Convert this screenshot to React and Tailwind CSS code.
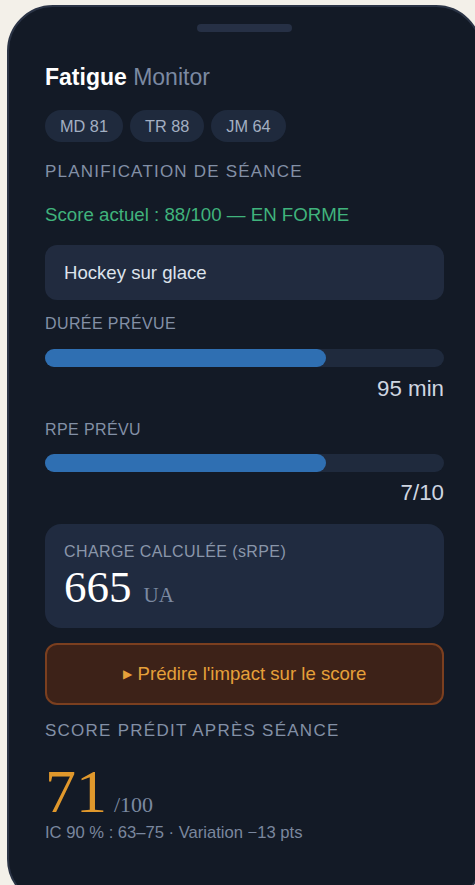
const chips = ['MD 81', 'TR 88', 'JM 64']

function Bar({ pct }) {
  return (
    <div className="h-[18px] w-full rounded-full bg-[#1f2a3d]">
      <div className="h-full rounded-full bg-[#2f6fb2]" style={{ width: `${pct}%` }} />
    </div>
  )
}

export default function App() {
  return (
    <div className="w-[475px] h-[885px] overflow-hidden bg-[#f3f0e9] font-['Liberation_Sans',Arial,sans-serif]">
      <div className="ml-[7px] mt-[5px] w-[475px] h-[900px] rounded-[46px] border-2 border-[#2b3446] bg-[#131a26] px-[36px] pt-[17px]">
        {/* notch */}
        <div className="mx-auto h-2 w-[95px] rounded-full bg-[#263045]" />

        <h1 className="mt-[31px] text-[23px] leading-[28px]">
          <span className="font-bold text-white">Fatigue</span>{' '}
          <span className="text-[#7b89a1]">Monitor</span>
        </h1>

        <div className="mt-[19px] flex gap-[7px]">
          {chips.map((c) => (
            <span key={c} className="flex h-8 items-center rounded-full bg-[#1f2a3d] px-[15px] text-[16.3px] text-[#a3afc2]">
              {c}
            </span>
          ))}
        </div>

        <p className="mt-[19px] text-[17px] leading-[22px] tracking-[1.2px] text-[#8390a6]">PLANIFICATION DE SÉANCE</p>

        <p className="mt-[20px] text-[18.7px] leading-[24px] text-[#40b37c]">Score actuel : 88/100 — EN FORME</p>

        <div className="mt-[18px] flex h-[55px] items-center rounded-xl bg-[#212b3f] px-[19px] text-[18.6px] text-[#dde3ec]">
          Hockey sur glace
        </div>

        <p className="mt-[14px] text-[16px] leading-[20px] tracking-[0.4px] text-[#8390a6]">DURÉE PRÉVUE</p>
        <div className="mt-[15px]">
          <Bar pct={70.5} />
        </div>
        <p className="mt-[8px] text-right text-[22.3px] leading-[28px] text-[#cfd6e1]">95 min</p>

        <p className="mt-[17px] text-[16px] leading-[20px] tracking-[0.4px] text-[#8390a6]">RPE PRÉVU</p>
        <div className="mt-[14px]">
          <Bar pct={70.5} />
        </div>
        <p className="mt-[7px] text-right text-[22.3px] leading-[28px] text-[#cfd6e1]">7/10</p>

        <div className="mt-[17px] h-[104px] rounded-2xl bg-[#202b40] px-[19px] pt-[18px]">
          <p className="text-[16px] leading-[20px] tracking-[0.4px] text-[#8a96aa]">CHARGE CALCULÉE (sRPE)</p>
          <div className="mt-[3px] flex items-baseline font-['Liberation_Serif',serif]">
            <span className="text-[45px] leading-[45px] text-white">665</span>
            <span className="ml-3 text-[21px] text-[#7b89a1]">UA</span>
          </div>
        </div>

        <button className="mt-[15px] flex h-[62px] w-full items-center justify-center rounded-xl border-2 border-[#7b3f1f] bg-[#3d2218] text-[18.6px] text-[#e6a03a]">
          <span className="mr-[6px] text-[12px]">▶</span>Prédire l'impact sur le score
        </button>

        <p className="mt-[15px] text-[17px] leading-[22px] tracking-[1.25px] text-[#8390a6]">SCORE PRÉDIT APRÈS SÉANCE</p>

        <div className="mt-[18px] flex items-baseline font-['Liberation_Serif',serif]">
          <span className="text-[62px] leading-[62px] text-[#e0982c]">71</span>
          <span className="ml-[7px] text-[22px] text-[#7b89a1]">/100</span>
        </div>
        <p className="text-[16.6px] leading-[22px] text-[#7a879e]">IC 90 % : 63–75 · Variation −13 pts</p>
      </div>
    </div>
  )
}
